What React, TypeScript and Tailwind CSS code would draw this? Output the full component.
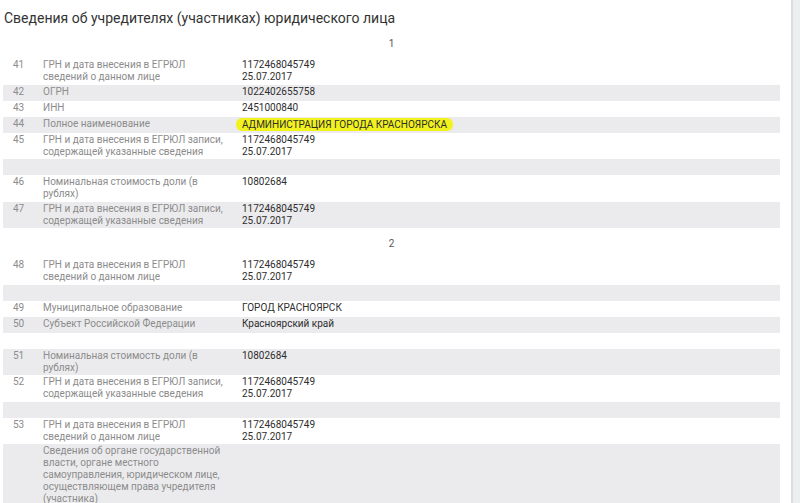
/**
 * Сведения об учредителях — таблица ЕГРЮЛ
 */

type Row = { n?: string; label?: string; value?: string[]; mark?: boolean }

const sectionOne: Row[] = [
  { n: '41', label: 'ГРН и дата внесения в ЕГРЮЛ сведений о данном лице', value: ['1172468045749', '25.07.2017'] },
  { n: '42', label: 'ОГРН', value: ['1022402655758'] },
  { n: '43', label: 'ИНН', value: ['2451000840'] },
  { n: '44', label: 'Полное наименование', value: ['АДМИНИСТРАЦИЯ ГОРОДА КРАСНОЯРСКА'], mark: true },
  { n: '45', label: 'ГРН и дата внесения в ЕГРЮЛ записи, содержащей указанные сведения', value: ['1172468045749', '25.07.2017'] },
  {},
  { n: '46', label: 'Номинальная стоимость доли (в рублях)', value: ['10802684'] },
  { n: '47', label: 'ГРН и дата внесения в ЕГРЮЛ записи, содержащей указанные сведения', value: ['1172468045749', '25.07.2017'] },
]

const sectionTwo: Row[] = [
  { n: '48', label: 'ГРН и дата внесения в ЕГРЮЛ сведений о данном лице', value: ['1172468045749', '25.07.2017'] },
  {},
  { n: '49', label: 'Муниципальное образование', value: ['ГОРОД КРАСНОЯРСК'] },
  { n: '50', label: 'Субъект Российской Федерации', value: ['Красноярский край'] },
  {},
  { n: '51', label: 'Номинальная стоимость доли (в рублях)', value: ['10802684'] },
  { n: '52', label: 'ГРН и дата внесения в ЕГРЮЛ записи, содержащей указанные сведения', value: ['1172468045749', '25.07.2017'] },
  {},
  { n: '53', label: 'ГРН и дата внесения в ЕГРЮЛ сведений о данном лице', value: ['1172468045749', '25.07.2017'] },
  { label: 'Сведения об органе государственной власти, органе местного самоуправления, юридическом лице, осуществляющем права учредителя (участника)' },
]

function TableRow({ row, striped }: { row: Row; striped: boolean }) {
  return (
    <div
      className={`grid grid-cols-[40px_199px_1fr] min-h-4 py-[1.25px] leading-[12px] ${
        striped ? 'bg-[#ebebed]' : 'bg-white'
      }`}
    >
      <div className="pl-[10px] text-[#8c8c8c]">{row.n}</div>
      <div className="pr-4 text-[#8c8c8c]">{row.label}</div>
      <div className="text-[#2e2e2e]">
        {row.value?.map((v) =>
          row.mark ? (
            <span key={v} className="-ml-[6px] inline-block rounded-[6px] bg-[#f2f21e] px-[6px] leading-[13px]">
              {v}
            </span>
          ) : (
            <div key={v}>{v}</div>
          )
        )}
      </div>
    </div>
  )
}

function Section({ title, rows }: { title: string; rows: Row[] }) {
  return (
    <div>
      <div className="flex h-[30px] items-center justify-center text-[10px] text-[#555]">
        {title}
      </div>
      {rows.map((row, i) => (
        <TableRow key={i} row={row} striped={i % 2 === 1} />
      ))}
    </div>
  )
}

export default function App() {
  return (
    <div className="flex h-[503px] w-[800px] overflow-hidden bg-white font-['Roboto','Liberation_Sans',sans-serif] text-[10px]">
      <div className="w-[791px] pl-[3px] pr-[11px]">
        {/* Header */}
        <h1 className="pt-[9px] pl-px text-[14px] leading-[19px] text-[#333]">
          Сведения об учредителях (участниках) юридического лица
        </h1>

        <Section title="1" rows={sectionOne} />
        <Section title="2" rows={sectionTwo} />
      </div>

      {/* Scroll track */}
      <div className="flex w-[9px]">
        <div className="w-[2px] bg-[#dcdde0]" />
        <div className="flex-1 bg-[#eceef0]" />
      </div>
    </div>
  )
}
